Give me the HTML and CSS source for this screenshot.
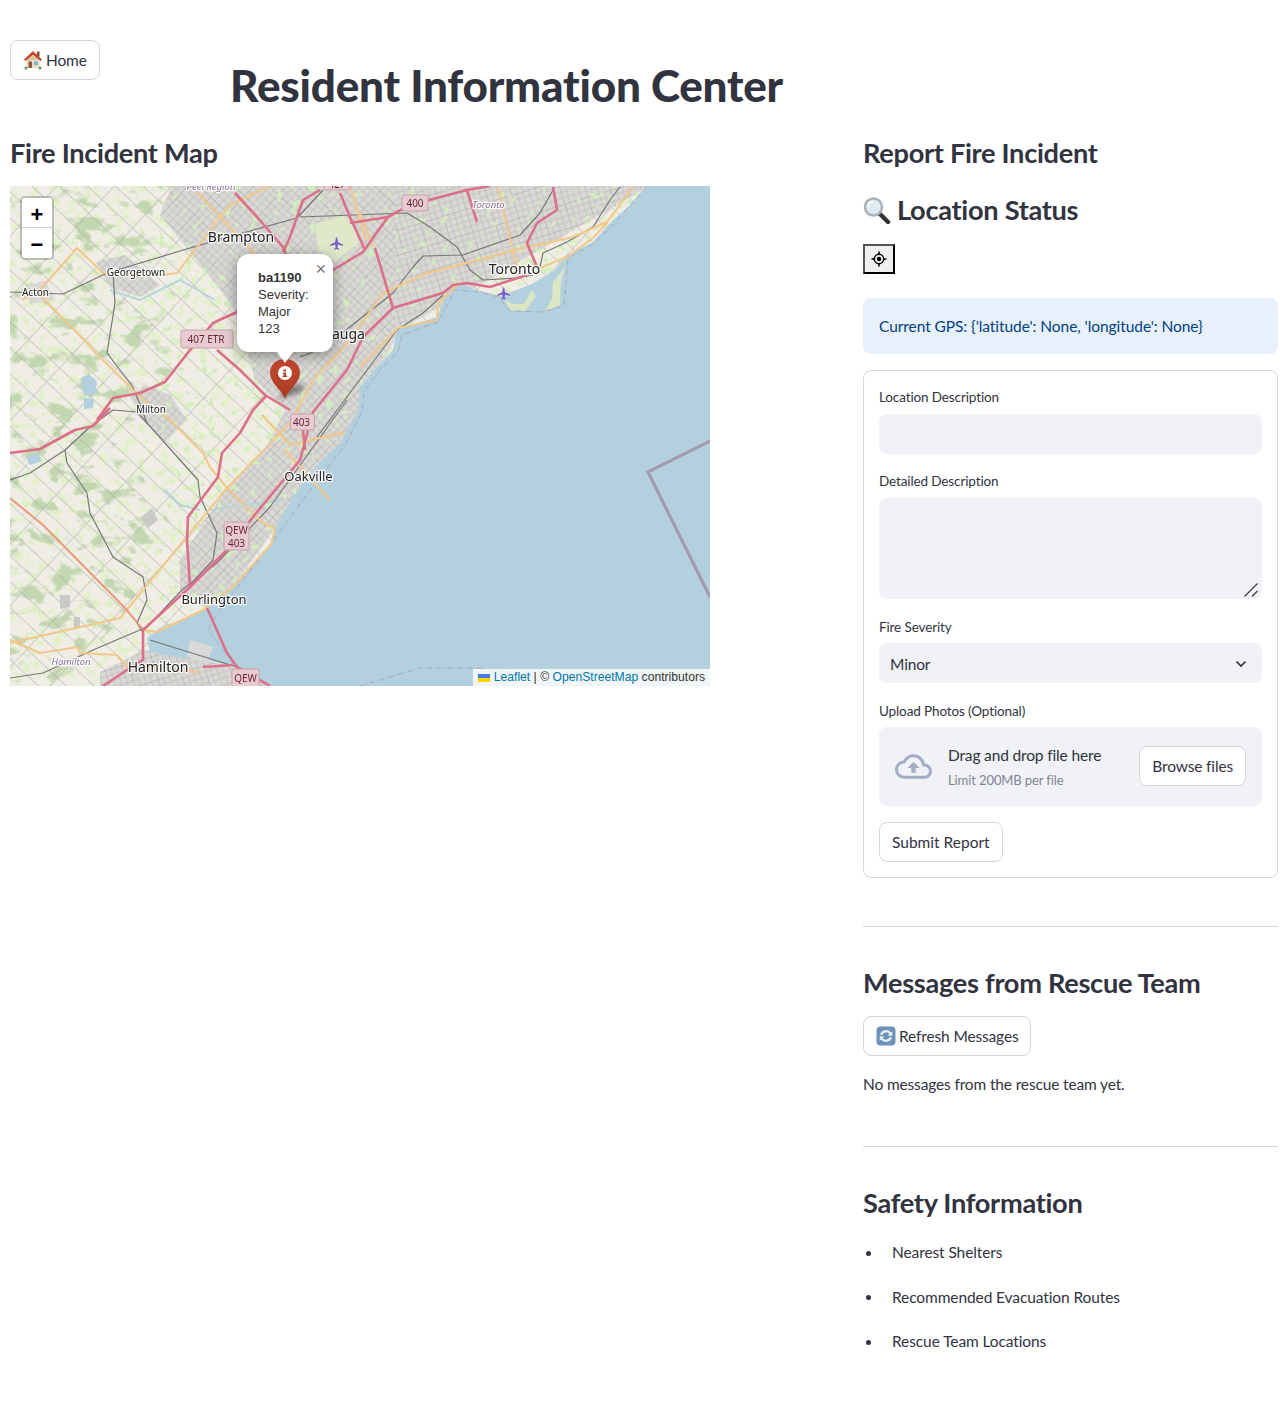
FILE: index.html
```html
<!DOCTYPE html>
<html lang="en">
<head>
<meta charset="utf-8">
<title>Resident Information Center</title>
<link rel="stylesheet" href="styles.css">
</head>
<body>
<div class="page">
  <header class="top">
    <div><button class="btn home-btn" type="button">
      <svg class="emoji" viewBox="0 0 20 20"><rect x="3.500" y="8" width="13" height="10" fill="#eadcc2"/><path d="M14 1.500h2.500v5h-2.500z" fill="#8a4b32"/><path d="M10 1L1 9.500L2.500 11L10 5L17.500 11L19 9.500Z" fill="#c2492f"/><path d="M10 5L4 10H16Z" fill="#d9c7a4"/><rect x="5.500" y="11.500" width="3.500" height="6.500" fill="#8d5a3a"/><rect x="11" y="11.500" width="4" height="3.500" fill="#7db7e0"/><circle cx="3" cy="18" r="1.500" fill="#5b9a3c"/><circle cx="17" cy="18" r="1.500" fill="#5b9a3c"/></svg>
      Home</button></div>
    <h1>Resident Information Center</h1>
  </header>
  <div class="cols">
    <section class="left">
      <h2>Fire Incident Map</h2>
      <div class="map">
        <svg class="tiles" viewBox="10 186 700 500" width="700" height="500" xmlns="http://www.w3.org/2000/svg">
          <defs>
            <filter id="forest" x="0" y="0" width="100%" height="100%" color-interpolation-filters="sRGB"><feTurbulence type="fractalNoise" baseFrequency="0.04 0.06" numOctaves="4" seed="7"/><feColorMatrix values="0 0 0 0 .76  0 0 0 0 .84  0 0 0 0 .69  8 0 0 0 -4.500"/></filter>
            <filter id="meadow" x="0" y="0" width="100%" height="100%" color-interpolation-filters="sRGB"><feTurbulence type="fractalNoise" baseFrequency="0.13" numOctaves="3" seed="21"/><feColorMatrix values="0 0 0 0 .88  0 0 0 0 .94  0 0 0 0 .78  9 0 0 0 -4.900"/></filter>
            <filter id="parks" x="0" y="0" width="100%" height="100%" color-interpolation-filters="sRGB"><feTurbulence type="fractalNoise" baseFrequency="0.12" numOctaves="2" seed="4"/><feColorMatrix values="0 0 0 0 .82  0 0 0 0 .93  0 0 0 0 .74  12 0 0 0 -7.700"/></filter>
            <pattern id="rural" width="42" height="19" patternUnits="userSpaceOnUse" patternTransform="rotate(43)"><path class="grid-rural" d="M0 0H42M0 0V19"/></pattern>
            <pattern id="urbanw" width="24" height="24" patternUnits="userSpaceOnUse" patternTransform="rotate(43)"><path class="grid-urban" d="M0 6H24M0 12H24M0 18H24M6 0V24M12 0V24M18 0V24"/><path class="grid-arterial" d="M0 0H24M0 0V24"/></pattern>
            <pattern id="urbane" width="24" height="24" patternUnits="userSpaceOnUse" patternTransform="rotate(-17)"><path class="grid-urban" d="M0 6H24M0 12H24M0 18H24M6 0V24M12 0V24M18 0V24"/><path class="grid-arterial" d="M0 0H24M0 0V24"/></pattern>
            <clipPath id="west"><path d="M10 186H170L150 260L200 330L120 440L175 530L120 620L60 686H10Z"/></clipPath>
          </defs>
          <rect class="land" x="10" y="186" width="700" height="500"/>
          <rect x="10" y="186" width="700" height="500" filter="url(#meadow)"/>
          <g clip-path="url(#west)"><rect x="10" y="186" width="700" height="500" filter="url(#forest)"/></g>
          <rect x="10" y="186" width="700" height="500" fill="url(#rural)"/>
          <path class="urban" d="M172 186L160 215L205 270L235 310L255 380L285 410L265 450L225 490L180 560L180 592L215 612L275 528L340 445L400 330L470 290L650 186Z"/>
          <path class="urban" d="M130 397L145 385L170 395L187 420L165 442L145 422Z"/>
          <path class="urban" d="M96 262L125 255L160 285L140 297L110 287Z"/>
          <path class="urban" d="M24 287L45 280L55 300L30 304Z"/>
          <path class="urban" d="M100 672L145 650L175 655L240 668L272 686H100Z"/>
          <path d="M172 186L160 215L205 270L235 310L255 380L285 410L265 450L225 490L180 560L180 592L215 612L275 528L340 445L395 330L395 186Z" fill="url(#urbanw)"/>
          <path d="M395 186V330L470 290L650 186Z" fill="url(#urbane)"/>
          <path d="M100 672L145 650L175 655L240 668L272 686H100Z" fill="url(#urbane)"/>
          <path d="M130 397L145 385L170 395L187 420L165 442L145 422Z" fill="url(#urbanw)"/>
          <path d="M96 262L125 255L160 285L140 297L110 287Z" fill="url(#urbanw)"/>
          <path d="M172 186L160 215L205 270L235 310L255 380L285 410L265 450L225 490L180 560L180 592L215 612L275 528L340 445L400 330L470 290L650 186Z" filter="url(#parks)"/>
          <path class="airport" d="M315 224L345 215L362 240L335 262L318 250Z"/>
          <polyline class="river" points="110,290 140,300 180,280 215,300"/>
          <polyline class="river" points="210,510 245,505 285,500"/>
          <polyline class="river" points="165,490 180,505 200,510"/>
          <path class="pond" d="M81 378l8-4 8 8-2 12-11 1zM84 398l10 1-1 9-9 1zM26 456l12-3 4 8-12 4z"/>
          <path class="block" d="M140 518l12-10 6 12-10 8zM60 595l10 0 0 12-10 2zM74 617l6 0 0 10-6 2z"/>

          <path class="water" d="M647 186L710 186V686H270L262 681L237 667L205 660L175 657L150 652L147 638L160 628L180 620L205 610L233 587L260 557L270 545L275 528L293 497L305 480L320 462L340 443L358 410L360 387L377 367L393 350L397 330L437 317L448 290L460 284L477 290L500 296L530 285L555 270L567 255L593 242L610 223L630 205Z"/>
          <path class="island" d="M503 297L510 310L525 311L536 296L532 290L524 304L512 304Z"/>
          <path class="island" d="M545 311L560 305L561 280L566 266L553 282L552 298Z"/>
          <path class="pier" d="M190 640L213 647L207 663L187 657Z"/>
          <polyline class="boundary" points="710,441 648,472 710,597"/>
          <polyline class="offshore" points="647,186 612,226 594,244 568,258 564,306 542,312 510,311 498,297 480,292 454,290 450,300 438,322 402,335 398,352 380,370 364,392 362,412 345,445 310,490 280,532 220,610 208,630 225,652"/>
          <polyline class="offshore" points="360,686 420,668 476,668 640,690"/>

          <g class="rail">
            <polyline points="10,292 63,294 107,273 200,245 297,218 323,190"/>
            <polyline points="300,217 407,213 430,227 457,247 470,270 483,280 517,278 533,275"/>
            <polyline points="113,273 115,303 107,353 133,387 147,423 198,480 200,497 217,533 213,560 190,585"/>
            <polyline points="347,400 270,507 217,563 182,590 147,627 93,650 43,673 10,678"/>
            <polyline points="317,437 397,330 423,313 443,295"/>
            <polyline points="300,357 323,348 393,293 413,267 423,256 463,255 520,235 540,213 553,190"/>
            <polyline points="540,267 543,253 567,242 593,227 610,200 620,187"/>
            <polyline points="10,480 30,473 65,450 90,427 113,410 137,412 147,423"/>
            <polyline points="65,450 67,463 87,493 90,513 113,557 143,577 147,600 137,623 143,633"/>
            <polyline points="150,640 240,668"/>
          </g>
          <g class="trunk">
            <polyline points="22,300 40,290 77,248 103,273 163,275 177,273 197,247 230,205 270,186"/>
            <polyline points="197,192 220,217 262,262"/>
            <polyline points="40,295 87,343 93,350 140,397 170,420 203,453 210,467 227,488 263,523 275,528 272,543 233,587 203,610 157,632 143,630"/>
            <polyline points="10,643 120,618 227,488 290,423 313,380 350,340 383,293 427,273 490,257 507,252 573,237 607,222 633,187"/>
            <polyline points="360,367 398,328 437,320 438,303 460,283"/>
            <polyline points="540,268 567,257 593,238 608,222"/>
            <polyline points="498,187 517,267"/>
            <polyline points="360,213 373,247"/>
            <polyline points="10,640 40,653 78,647 80,653 117,655 127,667 200,672"/>
            <polyline points="285,450 330,500"/>
            <polyline points="350,186 366,240"/>
            <polyline points="262,415 290,445 345,432"/>
          </g>
          <polyline class="primary" points="10,498 43,525 127,610 143,630"/>
          <g class="moto">
            <polyline points="10,453 40,449 75,430 93,426 110,408"/>
            <polyline points="97,420 113,398 140,393 165,382 190,350 213,323 237,312 333,270 363,252 388,217 410,205 467,190 490,186"/>
            <polyline points="375,248 393,308 443,293 453,285 467,283 490,287 527,275"/>
            <polyline points="393,308 363,337 347,370 313,412 300,460 253,517 227,550 190,587 143,630 143,660 127,670 103,686"/>
            <polyline points="302,422 305,450"/>
            <polyline points="187,540 188,517 218,477 222,453 240,433 253,410 267,395"/>
            <polyline points="187,540 190,587"/>
            <polyline points="207,608 227,653 237,667 270,686"/>
            <polyline points="203,667 233,665"/>
            <polyline points="217,350 240,370 265,395 290,410"/>
            <polyline points="235,193 257,217 283,247 287,257"/>
            <polyline points="320,190 303,200 290,237 283,252"/>
            <polyline points="340,193 350,217 365,250"/>
            <polyline points="350,223 388,217"/>
            <polyline points="553,187 557,210 537,223 527,243 537,267"/>
            <polyline points="467,190 477,222"/>
          </g>
          <path class="plane" d="M336 237.500l1.200 0 .8 4.500 5 2.800v1.200l-5-1.500-.5 3 1.500 1.300v.9l-2.400-.7-2.400.7v-.9l1.500-1.300-.5-3-5 1.500v-1.200l5-2.800.8-4.500z"/>
          <path class="plane" d="M503 287.500l1.200 0 .8 4.500 5 2.800v1.200l-5-1.500-.5 3 1.500 1.300v.9l-2.400-.7-2.400.7v-.9l1.500-1.300-.5-3-5 1.500v-1.200l5-2.800.8-4.500z"/>

          <g class="shield"><rect x="181" y="330" width="52" height="18" rx="2"/><text x="206" y="343">407 ETR</text></g>
          <g class="shield"><rect x="290.500" y="414" width="24" height="16" rx="2"/><text x="301.500" y="426">403</text></g>
          <g class="shield"><rect x="402" y="195" width="26" height="16" rx="2"/><text x="415" y="207">400</text></g>
          <g class="shield"><rect x="324" y="176" width="26" height="14" rx="2"/><text x="337" y="188">427</text></g>
          <g class="shield"><rect x="224" y="522" width="25" height="28" rx="2"/><text x="236.500" y="534">QEW</text><text x="236.500" y="547">403</text></g>
          <g class="shield"><rect x="232" y="669" width="27" height="20" rx="2"/><text x="245.500" y="682">QEW</text></g>

          <text class="city" x="241" y="242">Brampton</text>
          <text class="city" x="514.500" y="274">Toronto</text>
          <text class="city city-sm" x="308.500" y="481">Oakville</text>
          <text class="city city-sm" x="214" y="604">Burlington</text>
          <text class="city" x="158" y="672">Hamilton</text>
          <text class="city" x="325" y="339">Mississauga</text>
          <text class="town" x="136" y="276">Georgetown</text>
          <text class="town" x="35.500" y="296">Acton</text>
          <text class="town" x="151" y="413">Milton</text>
          <text class="region" x="71" y="665">Hamilton</text>
          <text class="region" x="488.500" y="208">Toronto</text>
          <text class="region" x="211" y="190">Peel Region</text>
        </svg>

        <div class="zoom-ctl"><button class="zoom-btn" type="button">+</button><button class="zoom-btn zoom-minus" type="button">−</button></div>
        <svg class="marker-shadow" viewBox="0 0 40 24" width="30" height="18"><path d="M3 22L16 3L36 2Q40 8 30 14Z"/></svg>
        <svg class="marker" viewBox="0 0 30 40" width="30" height="40"><defs><linearGradient id="pin" x1="0" y1="0" x2="0" y2="1"><stop offset="0" stop-color="#c5492f"/><stop offset="1" stop-color="#a83a22"/></linearGradient></defs><path d="M15 39.500C11 30 0 24 0 14C0 6 6 0 15 0C24 0 30 6 30 14C30 24 19 30 15 39.500Z" fill="url(#pin)"/><circle cx="15" cy="14" r="7" fill="#fff"/><path d="M13.300 10.500h2.800v2h-2.800zM12.800 13.500h3.300v3.200h1.100v1.300h-4.600v-1.300h1.100v-1.900h-.9z" fill="#b5402a"/></svg>
        <div class="popup">
          <span class="popup-close">×</span>
          <div class="popup-body"><b>ba1190</b><br>Severity:<br>Major<br>123</div>
          <span class="popup-tip"></span>
        </div>
        <div class="attrib"><svg class="flag" viewBox="0 0 12 8" width="12" height="8"><rect width="12" height="4" fill="#4C7BE1"/><rect y="4" width="12" height="4" fill="#FFD500"/></svg> <a>Leaflet</a> <span class="sep">|</span> © <a>OpenStreetMap</a> contributors</div>
      </div>
    </section>

    <aside class="right">
      <h2>Report Fire Incident</h2>
      <h3 class="status"><svg class="glass" viewBox="0 0 28 27"><path d="M17 17L25 25" stroke="#333" stroke-width="4.500" stroke-linecap="round"/><circle cx="10.500" cy="10" r="8.500" fill="#dfeaf2" stroke="#a9b2ba" stroke-width="2.500"/><path d="M5 10a6 6 0 0 1 5-5.500" fill="none" stroke="#fff" stroke-width="1.500"/></svg>Location Status</h3>
      <button class="geo" type="button"><svg viewBox="0 0 16 16" width="16" height="16"><circle cx="8" cy="8" r="4.700" fill="none" stroke="#000" stroke-width="1.500"/><circle cx="8" cy="8" r="2.200" fill="#000"/><path d="M8 .5v3M8 12.500v3M.5 8h3M12.500 8h3" stroke="#000" stroke-width="1.500"/></svg></button>
      <div class="info">Current GPS: {'latitude': None, 'longitude': None}</div>

      <form class="form-box">
        <label class="lbl" for="loc">Location Description</label>
        <input class="field" id="loc" type="text">
        <label class="lbl lbl-next" for="det">Detailed Description</label>
        <div class="area-wrap">
          <textarea class="field area" id="det"></textarea>
          <svg class="resizer" viewBox="0 0 14 14" width="14" height="14"><path d="M0.500 13.500L13.500 0.500M8 13.500L13.500 8" fill="none" stroke="#3a3a3a" stroke-width="1.200"/></svg>
        </div>
        <div class="lbl lbl-next lbl-later">Fire Severity</div>
        <div class="field select"><span>Minor</span><svg viewBox="0 0 12 8" width="12" height="8"><path d="M1.500 1.500L6 6l4.500-4.500" fill="none" stroke="#31333F" stroke-width="1.700"/></svg></div>
        <div class="lbl lbl-next lbl-later">Upload Photos (Optional)</div>
        <div class="drop">
          <svg class="cloud" viewBox="0 0 24 24"><path d="M19.350 10.040C18.670 6.590 15.640 4 12 4 9.110 4 6.600 5.640 5.350 8.040 2.340 8.360 0 10.910 0 14c0 3.310 2.690 6 6 6h13c2.760 0 5-2.240 5-5 0-2.640-2.050-4.780-4.650-4.960zM19 18H6c-2.210 0-4-1.790-4-4 0-2.050 1.530-3.760 3.560-3.970l1.070-.11.5-.95C8.080 7.140 9.940 6 12 6c2.620 0 4.880 1.860 5.390 4.430l.3 1.500 1.530.11c1.560.1 2.780 1.410 2.780 2.960 0 1.650-1.350 3-3 3zM8 13h2.550v3h2.900v-3H16l-4-4z"/></svg>
          <div class="drop-text"><div class="drop-main">Drag and drop file here</div><div class="drop-sub">Limit 200MB per file</div></div>
          <button class="btn browse" type="button">Browse files</button>
        </div>
        <button class="btn submit" type="button">Submit Report</button>
      </form>

      <hr class="rule rule-a">
      <h2>Messages from Rescue Team</h2>
      <button class="btn refresh" type="button"><svg class="emoji" viewBox="0 0 20 20"><rect x="0.500" y="0.500" width="19" height="19" rx="4" fill="#6b93b8"/><path d="M4 8.500a6.300 6.300 0 0 1 11-2l1.300-1.300v4.600h-4.600l1.700-1.700a4.200 4.200 0 0 0-7.300.9z" fill="#eef1f3"/><path d="M16 11.500a6.300 6.300 0 0 1-11 2l-1.300 1.300v-4.600h4.600l-1.700 1.700a4.200 4.200 0 0 0 7.300-.9z" fill="#eef1f3"/></svg>Refresh Messages</button>
      <p class="no-msg">No messages from the rescue team yet.</p>
      <hr class="rule rule-b">
      <h2>Safety Information</h2>
      <ul class="safety">
        <li>Nearest Shelters</li>
        <li>Recommended Evacuation Routes</li>
        <li>Rescue Team Locations</li>
      </ul>
    </aside>
  </div>
</div>
</body>
</html>
```
FILE: styles.css
```css
* { box-sizing: border-box; }
html, body { margin: 0; padding: 0; background: #fff; }
body { font-family: "Lato", "Noto Sans", sans-serif; color: #31333F; font-size: 15.500px; letter-spacing: -0.15px; }
.page { padding: 40px 8px 20px 10px; width: 1286px; min-height: 1406px; }
.top { display: grid; grid-template-columns: 220px 1fr; height: 90px; }
h1 { margin: 19px 0 0; font-size: 44px; line-height: 52px; font-weight: 900; letter-spacing: -0.2px; }
h2 { margin: 0; font-size: 27.200px; line-height: 46px; padding-bottom: 2px; font-weight: 700; letter-spacing: -0.3px; }
.cols { display: grid; grid-template-columns: 853px 415px; align-items: start; }

.btn { font: inherit; letter-spacing: inherit; color: #31333F; background: #fff; border: 1px solid #d6d6d9; border-radius: 8px; height: 40px; padding: 0 12px 1px; display: inline-flex; align-items: center; }
.emoji { width: 20px; height: 20px; margin-right: 3px; flex: none; }

.left h2 { margin-bottom: 8px; }
.map { position: relative; width: 700px; height: 500px; overflow: hidden; }
.tiles { display: block; filter: blur(.3px); letter-spacing: 0; }
.land { fill: #f0ede6; }
.water { fill: #b2d0dd; }
.urban { fill: #dad8d5; }
.grid-rural { fill: none; stroke: #aeacab; stroke-width: 1; }
.grid-urban { fill: none; stroke: #bdbbba; stroke-width: .7; }
.grid-arterial { fill: none; stroke: #a8a6a6; stroke-width: 1; }
.airport { fill: #dfe8c9; }
.river { fill: none; stroke: #b5d7dc; stroke-width: 2; }
.pond { fill: #b2d0dd; }
.block { fill: #c9c9c6; }
.island { fill: #dbe6c4; }
.pier { fill: #d9d9d7; }
.boundary { fill: none; stroke: #a597ad; stroke-width: 3; }
.offshore { fill: none; stroke: #a89cb4; stroke-width: .8; stroke-dasharray: 5 2 1 2; }
.rail polyline { fill: none; stroke: #777; stroke-width: 1.200; stroke-linejoin: round; }
.trunk polyline { fill: none; stroke: #f2c788; stroke-width: 2; stroke-linejoin: round; }
.primary { fill: none; stroke: #ea9a7c; stroke-width: 2; }
.moto polyline { fill: none; stroke: #dd7089; stroke-width: 2.600; stroke-linejoin: round; }
.plane { fill: #7a5fcf; }
.shield rect { fill: #e6cbd0; stroke: #c9a2aa; stroke-width: 1; }
.shield text { font-family: "Noto Sans", sans-serif; font-size: 10px; fill: #6e1f38; text-anchor: middle; }
.city, .town, .region { font-family: "Noto Sans", sans-serif; text-anchor: middle; paint-order: stroke; stroke: rgba(255,255,255,.85); stroke-width: 2.500px; }
.city { font-size: 14px; fill: #222; }
.city-sm { font-size: 13px; }
.town { font-size: 10px; fill: #222; }
.region { font-size: 9.500px; fill: #8a6f96; font-style: italic; }

.zoom-ctl { position: absolute; left: 10px; top: 10px; border: 2px solid rgba(0,0,0,.2); border-radius: 5px; background-clip: padding-box; display: flex; flex-direction: column; }
.zoom-btn { width: 30px; height: 30px; border: 0; border-bottom: 1px solid #ccc; background: #fff; font: 700 22px/26px "Liberation Sans", sans-serif; color: #000; padding: 4px 0 0; border-radius: 2px 2px 0 0; }
.zoom-minus { border-bottom: 0; border-radius: 0 0 2px 2px; }

.marker-shadow { position: absolute; left: 266px; top: 197px; filter: blur(2px); opacity: .45; }
.marker-shadow path { fill: #222; }
.marker { position: absolute; left: 260px; top: 173px; }
.popup { position: absolute; left: 227px; top: 68px; width: 96px; height: 98px; background: #fff; border-radius: 12px; box-shadow: 0 3px 14px rgba(0,0,0,.4); font: 13px/17px "Liberation Sans", Arial, sans-serif; letter-spacing: 0; color: #333; }
.popup-body { padding: 15px 0 0 21px; }
.popup-close { position: absolute; right: 7px; top: 5px; font-size: 18px; line-height: 20px; color: #757575; }
.popup-tip { position: absolute; left: 40px; bottom: -11px; width: 0; height: 0; border-left: 8px solid transparent; border-right: 8px solid transparent; border-top: 11px solid #fff; }
.attrib { position: absolute; right: 0; bottom: 0; height: 17px; padding: 0 5px; background: rgba(255,255,255,.8); font: 12.150px/17px "Liberation Sans", Arial, sans-serif; letter-spacing: 0; color: #333; white-space: nowrap; }
.attrib a { color: #0078A8; }
.flag { vertical-align: -0.5px; }

h3.status { margin: 11px 0 0; font-size: 27.200px; line-height: 42px; padding-bottom: 2px; font-weight: 700; letter-spacing: -0.3px; display: flex; align-items: center; }
.glass { width: 28px; height: 27px; margin-right: 6px; flex: none; }
.geo { display: flex; align-items: center; justify-content: center; margin-top: 11px; width: 32px; height: 30px; padding: 0; background: #efefef; border: 2px solid; border-color: #555 #000 #000 #555; }
.info { margin-top: 24px; height: 56px; padding: 0 16px; background: #e8f0fb; border-radius: 8px; color: #004280; letter-spacing: -0.07px; line-height: 56px; }
.form-box { margin-top: 16px; border: 1px solid #d6d6d9; border-radius: 8px; padding: 15px; display: flex; flex-direction: column; align-items: stretch; }
.lbl { font-size: 13.500px; letter-spacing: -0.12px; line-height: 22px; margin-bottom: 6px; }
.lbl-next { margin-top: 16px; }
.lbl-later { margin-top: 17px; margin-bottom: 5px; }
.field { display: block; width: 100%; height: 40px; background: #f0f2f6; border: 0; border-radius: 8px; font: inherit; color: #31333F; outline: 0; }
.area-wrap { position: relative; }
.area { height: 101px; resize: none; }
.resizer { position: absolute; right: 4px; bottom: 2px; }
.select { display: flex; align-items: center; justify-content: space-between; padding: 1px 15px 0 11px; }
.drop { height: 79px; background: #f0f2f6; border-radius: 8px; padding: 0 16px; display: flex; align-items: center; }
.cloud { width: 37px; height: 37px; fill: #a3aec6; flex: none; margin-right: 16px; }
.drop-text { flex: 1; }
.drop-main { line-height: 24px; }
.drop-sub { font-size: 13px; letter-spacing: -0.1px; line-height: 22px; color: #808495; margin-top: 2px; }
.browse { flex: none; margin-top: -1px; padding-bottom: 0; }
.submit { align-self: flex-start; margin-top: 16px; letter-spacing: 0; }

.rule { border: 0; border-top: 1px solid #d6d6d9; margin: 0; }
.rule-a { margin-top: 48px; margin-bottom: 33px; }
.refresh { margin-top: 8px; padding-bottom: 0; }
.no-msg { margin: 17px 0 0; line-height: 22px; padding-bottom: 2px; }
.rule-b { margin-top: 49px; margin-bottom: 33px; }
.safety { margin: 12px 0 0; padding: 0; list-style: none; letter-spacing: -0.1px; }
.safety li { display: flex; align-items: center; height: 24px; margin-bottom: 20.500px; }
.safety li::before { content: ""; width: 5px; height: 5px; border-radius: 50%; background: #31333F; margin: 2px 21px 0 3px; flex: none; }
```
